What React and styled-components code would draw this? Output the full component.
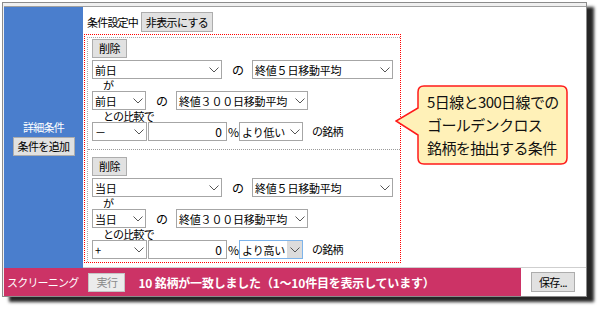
import styled, { createGlobalStyle } from 'styled-components';

const GlobalStyle = createGlobalStyle`
  html, body { margin: 0; padding: 0; background: #fff; }
  body { font-family: "Noto Sans CJK JP", "Noto Sans", sans-serif; color: #000; }
  * { box-sizing: border-box; }
`;

const Page = styled.div`
  position: relative;
  width: 600px;
  height: 309px;
  padding: 2px 0 0 2px;
`;

const Window = styled.div`
  width: 585px;
  height: 295px;
  border: 1px solid #8c8c8c;
  background: #f0f0f0;
  padding: 3px 0 0 1px;
  box-shadow: 7px 5px 3px rgba(0, 0, 0, 0.85);
  display: flex;
  flex-direction: column;
`;

const Body = styled.div`
  flex: 1;
  border-top: 1px solid #a0a0a0;
  background: #fff;
  display: flex;
  flex-direction: column;
`;

const Main = styled.div`
  height: 261px;
  display: flex;
`;

const Side = styled.div`
  width: 79px;
  background: #4a7ecd;
  display: flex;
  flex-direction: column;
  align-items: center;
  justify-content: center;
  gap: 2px;
  color: #fff;
  font-size: 11px;
  letter-spacing: -0.8px;
`;

const Content = styled.div`
  flex: 1;
  padding: 5px 0 0 1px;
  border-bottom: 1px solid #cfcfcf;
`;

const TopRow = styled.div`
  display: flex;
  align-items: center;
  gap: 3px;
  padding-left: 3px;
  height: 20px;
  font-size: 11px;
`;

const Label = styled.span`
  font-size: ${p => p.$size || 11}px;
  letter-spacing: ${p => (p.$tight ? '-0.8px' : '0')};
  line-height: 1;
  white-space: nowrap;
  margin: 0 ${p => p.$mr || 0}px 0 ${p => p.$ml || 0}px;
`;

const Button = styled.button`
  width: ${p => p.$w}px;
  height: ${p => p.$h || 19}px;
  margin-left: ${p => p.$ml || 0}px;
  padding: 0;
  border: 1px solid ${p => (p.disabled ? '#c4c4c4' : '#adadad')};
  background: ${p => (p.disabled ? '#ececec' : '#e1e1e1')};
  color: ${p => (p.disabled ? '#8a8a8a' : '#000')};
  font-family: inherit;
  font-size: 11px;
  letter-spacing: -0.6px;
  line-height: 1;
  display: flex;
  align-items: center;
  justify-content: center;
`;

const RedBox = styled.div`
  margin-top: 2px;
  width: 317px;
  border: 1px dotted #ff0000;
  padding: 2px 0 0 2px;
`;

const Conditions = styled.div`
  border-left: 1px dotted #a8a8a8;
  border-top: 1px dotted #a8a8a8;
`;

const Block = styled.div`
  padding: 1px 4px 8px 4px;
  display: flex;
  flex-direction: column;
  align-items: flex-start;
  & + & {
    border-top: 1px dotted #9a9a9a;
    padding-top: 7px;
  }
  &:last-child {
    padding-bottom: 3px;
  }
`;

const Row = styled.div`
  display: flex;
  align-items: center;
  height: 19px;
  margin-top: ${p => p.$mt || 0}px;
`;

const Caption = styled.div`
  height: 12px;
  font-size: 11px;
  letter-spacing: -0.8px;
  line-height: 12px;
  padding-left: ${p => p.$indent}px;
`;

const SelectBox = styled.div`
  width: ${p => p.$w}px;
  height: 19px;
  border: 1px solid ${p => (p.$focus ? '#7eb4ea' : '#a6a6a6')};
  background: #fff;
  display: flex;
  align-items: stretch;
  font-size: 11px;
`;

const SelectText = styled.span`
  flex: 1;
  min-width: 0;
  padding-left: 2px;
  display: flex;
  align-items: center;
  white-space: nowrap;
  letter-spacing: -0.2px;
`;

const Arrow = styled.span`
  width: 15px;
  flex: none;
  display: flex;
  align-items: center;
  justify-content: center;
  background: ${p => (p.$focus ? '#dcdcdc' : 'transparent')};
`;

const NumInput = styled.div`
  width: 79px;
  height: 19px;
  margin-left: 1px;
  border: 1px solid #a6a6a6;
  background: #fff;
  font-size: 12px;
  display: flex;
  align-items: center;
  justify-content: flex-end;
  padding-right: 4px;
`;

const Footer = styled.div`
  height: 28px;
  display: flex;
`;

const Status = styled.div`
  width: 517px;
  background: #cc3366;
  color: #fff;
  display: flex;
  align-items: center;
  padding-left: 3px;
  font-size: 11px;
`;

const Count = styled.span`
  font-weight: 700;
  font-size: 12px;
  letter-spacing: -0.2px;
  margin-left: 13px;
  white-space: nowrap;
`;

const SaveCell = styled.div`
  flex: 1;
  display: flex;
  align-items: center;
  padding-left: 10px;
  background: #fff;
`;

const Callout = styled.div`
  position: absolute;
  left: 395px;
  top: 85px;
  width: 175px;
  height: 82px;
`;

const CalloutShape = styled.svg`
  position: absolute;
  inset: 0;
`;

const CalloutText = styled.div`
  position: relative;
  padding: 5px 0 0 32px;
  font-size: 15px;
  line-height: 23px;
  letter-spacing: -0.6px;
  color: #111;
  white-space: nowrap;
`;

const Chevron = () => (
  <svg width="10" height="6" viewBox="0 0 10 6">
    <path d="M0.5 0.5 L5 5 L9.5 0.5" fill="none" stroke="#555" strokeWidth="1" />
  </svg>
);

const Select = ({ w, children, focus }) => (
  <SelectBox $w={w} $focus={focus}>
    <SelectText>{children}</SelectText>
    <Arrow $focus={focus}>
      <Chevron />
    </Arrow>
  </SelectBox>
);

const ConditionBlock = ({ day, sign, cmp, focus }) => (
  <Block>
    <Button $w={35}>削除</Button>
    <Row $mt={2}>
      <Select w={130}>{day}</Select>
      <Label $size={12} $ml={10} $mr={8}>の</Label>
      <Select w={141}>終値５日移動平均</Select>
    </Row>
    <Caption $indent={11}>が</Caption>
    <Row>
      <Select w={54}>{day}</Select>
      <Label $size={12} $ml={10} $mr={8}>の</Label>
      <Select w={132}>終値３００日移動平均</Select>
    </Row>
    <Caption $indent={11}>との比較で</Caption>
    <Row>
      <Select w={55}>{sign}</Select>
      <NumInput>0</NumInput>
      <Label $size={12} $ml={1}>%</Label>
      <Select w={64} focus={focus}>{cmp}</Select>
      <Label $tight $ml={9}>の銘柄</Label>
    </Row>
  </Block>
);

export default function App() {
  return (
    <Page>
      <GlobalStyle />
      <Window>
        <Body>
          <Main>
            <Side>
              <span>詳細条件</span>
              <Button $w={62}>条件を追加</Button>
            </Side>
            <Content>
              <TopRow>
                <Label $tight>条件設定中</Label>
                <Button $w={72} $h={20}>非表示にする</Button>
              </TopRow>
              <RedBox>
                <Conditions>
                  <ConditionBlock day="前日" sign="－" cmp="より低い" />
                  <ConditionBlock day="当日" sign="+" cmp="より高い" focus />
                </Conditions>
              </RedBox>
            </Content>
          </Main>
          <Footer>
            <Status>
              <Label $tight>スクリーニング</Label>
              <Button $w={37} $ml={10} disabled>実行</Button>
              <Count>10 銘柄が一致しました（1～10件目を表示しています）</Count>
            </Status>
            <SaveCell>
              <Button $w={44} $h={20}>保存...</Button>
            </SaveCell>
          </Footer>
        </Body>
      </Window>
      <Callout>
        <CalloutShape width="175" height="82" viewBox="0 0 175 82">
          <path
            d="M29 1 H166 Q172 1 172 7 V73 Q172 79 166 79 H29 Q23 79 23 73 V50 L1 36 L23 23 V7 Q23 1 29 1 Z"
            fill="#fff1b8"
            stroke="#ff1a1a"
            strokeWidth="1.5"
          />
        </CalloutShape>
        <CalloutText>
          <div>5日線と300日線での</div>
          <div>ゴールデンクロス</div>
          <div>銘柄を抽出する条件</div>
        </CalloutText>
      </Callout>
    </Page>
  );
}
